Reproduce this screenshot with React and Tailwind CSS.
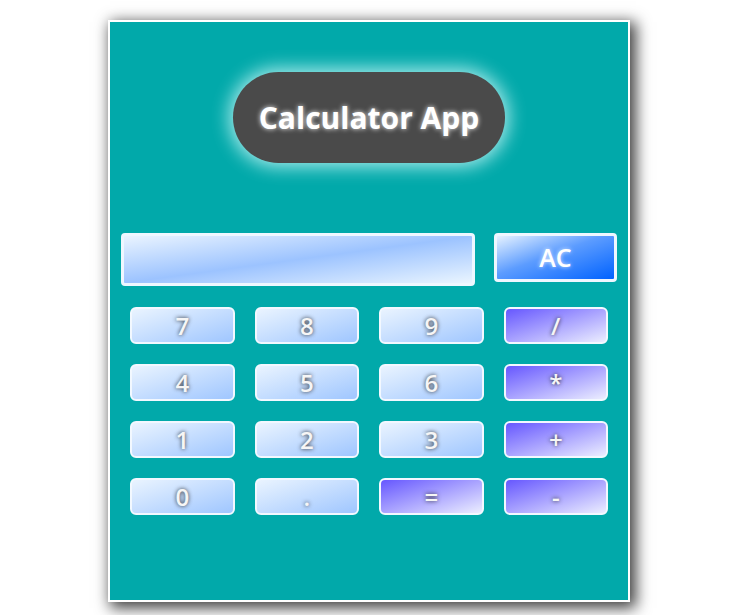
import React from "react";

const nums = "bg-[linear-gradient(to_bottom_right,#eaf4ff,#9fc6ff)]";
const ops = "bg-[linear-gradient(to_bottom_right,#6657ff,#eceeff)]";

const keys = [
  ["7", nums], ["8", nums], ["9", nums], ["/", ops],
  ["4", nums], ["5", nums], ["6", nums], ["*", ops],
  ["1", nums], ["2", nums], ["3", nums], ["+", ops],
  ["0", nums], [".", nums], ["=", ops], ["-", ops],
];

export default function App() {
  return (
    <div className="min-h-[615px] w-full bg-white pt-5 font-['Open_Sans',sans-serif]">
      <div className="mx-auto flex h-[582px] w-[522px] flex-col border-2 border-white bg-[#01a9aa] shadow-[4px_4px_14px_2px_rgba(0,0,0,0.75)]">
        <div className="mx-auto mt-[50px] flex h-[91px] w-[272px] items-center justify-center rounded-full bg-[#4a4a4a] shadow-[0_0_18px_4px_rgba(220,255,255,0.75)]">
          <span className="text-[30px] font-bold leading-none text-white [text-shadow:0_0_5px_rgba(255,255,255,0.9)]">
            Calculator App
          </span>
        </div>

        <div className="mt-[70px] flex items-start gap-[19px] px-[11px]">
          <div className="h-[53px] w-[354px] rounded-[4px] border-[3px] border-[#eef7ff] bg-[linear-gradient(to_bottom_right,#eaf4ff,#9cc3ff_50%,#eaf5ff)]" />
          <button className="flex h-[49px] w-[123px] items-center justify-center rounded-[4px] border-[3px] border-[#eef7ff] bg-[linear-gradient(to_bottom_right,#e6f2ff,#5c9cff_45%,#0062ff)] text-[25px] font-semibold text-white [text-shadow:0_0_4px_rgba(255,255,255,0.8)]">
            AC
          </button>
        </div>

        <div className="mt-[21px] grid grid-cols-4 gap-x-5 gap-y-5 px-5">
          {keys.map(([k, bg]) => (
            <button
              key={k}
              className={`flex h-[37px] items-center justify-center rounded-[6px] border-2 border-[#f2f8ff] ${bg} text-[24px] font-semibold leading-none text-[#f6f6f6] [text-shadow:0_0_4px_rgba(40,40,40,1)]`}
            >
              {k}
            </button>
          ))}
        </div>
      </div>
    </div>
  );
}
